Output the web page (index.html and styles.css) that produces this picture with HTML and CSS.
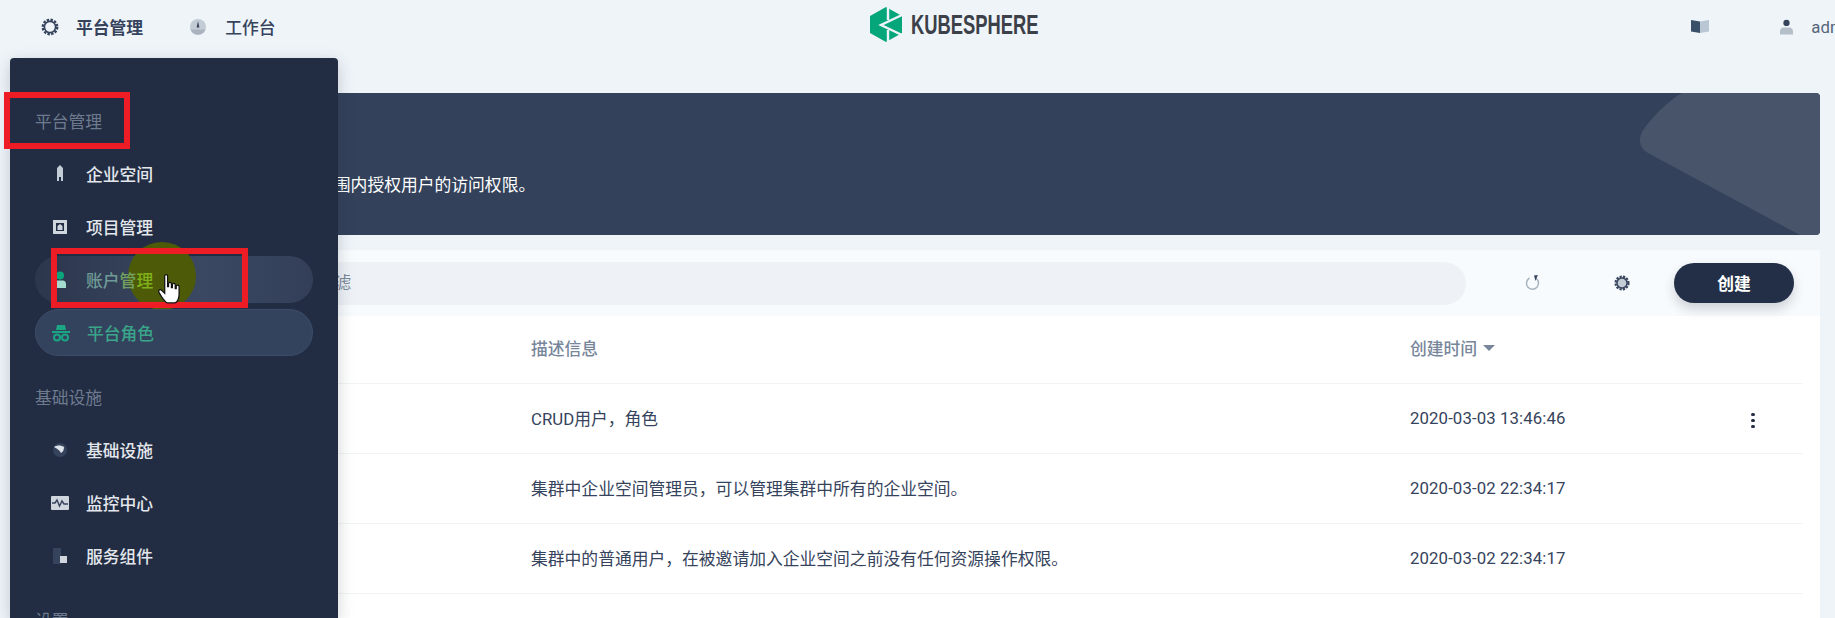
FILE: index.html
```html
<!DOCTYPE html>
<html lang="zh-CN">
<head>
    <meta charset="UTF-8">
    <meta name="viewport" content="width=device-width, initial-scale=1.0">
    <title>平台角色 - KubeSphere</title>
    <link rel="stylesheet" href="styles.css">
</head>
<body>
    <header class="topbar">
        <nav class="topbar-nav">
            <a class="topbar-link">
                <svg class="topbar-icon" viewBox="0 0 20 20"><circle cx="10" cy="10" r="7.2" fill="none" stroke="#36435c" stroke-width="2.4" stroke-dasharray="2.4 1.4"/><circle cx="10" cy="10" r="5.6" fill="none" stroke="#36435c" stroke-width="1.6"/></svg>
                平台管理
            </a>
            <a class="topbar-link">
                <svg class="topbar-icon" viewBox="0 0 20 20"><circle cx="10" cy="10" r="8" fill="#c3cbd4"/><path d="M2.6 12.5a8 8 0 0 0 14.8 0z" fill="#a9b3bf"/><path d="M10 4l1.4 6.5h-2.8z" fill="#36435c"/></svg>
                工作台
            </a>
        </nav>
        <div class="logo">
            <svg class="logo-mark" viewBox="0 0 32 35">
                <path d="M16 0L32 9V26L16 35L0 26V9z" fill="#05a67a"/>
                <path d="M18 0V13M18 23V35M32 8L11 18L32 28" fill="none" stroke="#eff4f9" stroke-width="2.4"/>
            </svg>
            <span class="logo-text">KUBESPHERE</span>
        </div>
        <div class="topbar-right">
            <svg class="book-icon" viewBox="0 0 18 13"><path d="M0 0l9 1.5V13L0 11.5z" fill="#3a5068"/><path d="M18 0L9 1.5V13l9-1.5z" fill="#b9c6d3"/></svg>
            <a class="user-link">
                <svg class="user-icon" viewBox="0 0 14 16"><circle cx="7" cy="3.6" r="3.4" fill="#36435c"/><path d="M0 16v-3.5C0 10 2 8.5 4 8.5h6c2 0 4 1.500 4 4V16z" fill="#b4bfca"/></svg>
                admin
            </a>
        </div>
    </header>

    <main class="content">
        <section class="banner">
            <svg class="banner-shape" viewBox="0 0 180 142"><path d="M42 0H176a4 4 0 0 1 4 4V138a4 4 0 0 1-4 4H160L8 60C-2 54-2 44 4 36C12 24 28 8 42 0z" fill="#475469"/></svg>
            <h1 class="banner-title">平台角色</h1>
            <p class="banner-desc">平台角色定义了平台范围内授权用户的访问权限。</p>
        </section>

        <section class="panel">
            <div class="toolbar">
                <div class="search">请输入关键词过滤</div>
                <button class="icon-button">
                    <svg viewBox="0 0 16 16" width="16" height="16"><path d="M10.800 3.200A6 6 0 1 1 4.500 3" fill="none" stroke="#a8b3bf" stroke-width="1.500"/><path d="M9 0.500L12.800 0L10.500 6z" fill="#36435c"/></svg>
                </button>
                <button class="icon-button">
                    <svg viewBox="0 0 20 20" width="18" height="18"><circle cx="10" cy="10" r="7.200" fill="#c3ccd5" stroke="#36435c" stroke-width="2.400" stroke-dasharray="2.400 1.400"/><circle cx="10" cy="10" r="5.600" fill="none" stroke="#36435c" stroke-width="1.600"/></svg>
                </button>
                <button class="create-button">创建</button>
            </div>

            <div class="table">
                <div class="table-row table-head">
                    <span></span>
                    <span>描述信息</span>
                    <span class="sortable">创建时间<i class="sort-caret"></i></span>
                    <span></span>
                </div>
                <div class="table-row">
                    <span></span>
                    <span>CRUD用户，角色</span>
                    <span class="row-date">2020-03-03 13:46:46</span>
                    <span class="row-more"><i></i><i></i><i></i></span>
                </div>
                <div class="table-row">
                    <span></span>
                    <span>集群中企业空间管理员，可以管理集群中所有的企业空间。</span>
                    <span class="row-date">2020-03-02 22:34:17</span>
                    <span></span>
                </div>
                <div class="table-row">
                    <span></span>
                    <span>集群中的普通用户，在被邀请加入企业空间之前没有任何资源操作权限。</span>
                    <span class="row-date">2020-03-02 22:34:17</span>
                    <span></span>
                </div>
            </div>
        </section>
    </main>

    <aside class="menu">
        <h2 class="menu-heading">平台管理</h2>
        <ul class="menu-list">
            <li class="menu-item">
                <svg class="menu-icon" viewBox="0 0 20 20"><path d="M7 17V4l3-3 3 3v13h-2v-4H9v4z" fill="#c3cdd8"/></svg>
                企业空间
            </li>
            <li class="menu-item">
                <svg class="menu-icon" viewBox="0 0 20 20"><path d="M3 3h14v14H3zM6 6v8h8V6z" fill="#cfd6de" fill-rule="evenodd"/><path d="M7.500 13V9l2.500-2 2.500 2v4z" fill="#cfd6de"/></svg>
                项目管理
            </li>
            <li class="menu-item menu-item-hover">
                <span class="cursor-glow"></span>
                <svg class="menu-icon" viewBox="0 0 20 20"><circle cx="10" cy="5.500" r="4" fill="#0aa67c"/><path d="M4 18v-4c0-2 1.500-3.500 3-3.500h6c1.500 0 3 1.500 3 3.500v4z" fill="#a5dcd0"/></svg>
                <span class="menu-label">账户<span class="glow-fade">管</span><span class="glow-text">理</span></span>
            </li>
            <li class="menu-item menu-item-active">
                <svg class="menu-icon" viewBox="0 0 20 20"><path d="M6 2h8l1 5H5zM1 8h18v2H1z" fill="#1aa583"/><circle cx="6" cy="14.500" r="3" fill="none" stroke="#1aa583" stroke-width="2"/><circle cx="14" cy="14.500" r="3" fill="none" stroke="#1aa583" stroke-width="2"/></svg>
                平台角色
            </li>
        </ul>
        <h2 class="menu-heading">基础设施</h2>
        <ul class="menu-list">
            <li class="menu-item">
                <svg class="menu-icon" viewBox="0 0 20 20"><circle cx="10" cy="10" r="7" fill="#36435c"/><path d="M4 7c3-2 7-2 10 0 0 3-1 5-3 6-1-2-3-4-7-6z" fill="#dfe4ea"/></svg>
                基础设施
            </li>
            <li class="menu-item">
                <svg class="menu-icon" viewBox="0 0 20 20"><rect x="1" y="3" width="18" height="14" rx="1" fill="#cfd6de"/><path d="M2 10h3l2-3 2.500 6L12 8l2 3h4" fill="none" stroke="#36435c" stroke-width="1.400"/></svg>
                监控中心
            </li>
            <li class="menu-item">
                <svg class="menu-icon" viewBox="0 0 20 20"><rect x="3" y="2" width="8" height="16" fill="#36435c"/><rect x="10" y="10" width="7" height="7" fill="#cfd6de"/></svg>
                服务组件
            </li>
        </ul>
        <h2 class="menu-heading">设置</h2>
    </aside>

    <!-- annotations drawn over the recording -->
    <div class="mark mark-heading"></div>
    <div class="mark mark-item"></div>
    <svg class="hand-cursor" viewBox="0 0 24 32">
        <path d="M7 2c0-2 3-2 3 0v11l1 0V10c0-2 3-2 3 0v4h1v-3c0-2 3-2 3 0v4h1v-2c0-2 3-2 3 0v8c0 5-2 9-5 9h-7c-2 0-4-3-6-6l-3-5c-1-2 1-4 3-2l3 3z" fill="#fff" stroke="#111" stroke-width="1.300"/>
    </svg>
</body>
</html>
```

FILE: styles.css
```css
* {
    box-sizing: border-box;
}

html, body {
    margin: 0;
    height: 100%;
    overflow: hidden;
}

body {
    position: relative;
    font-family: Roboto, "Noto Sans CJK SC", sans-serif;
    font-size: 16.8px;
    color: #36435c;
    background-color: #eff4f9;
}

/* top bar */
.topbar {
    display: flex;
    align-items: center;
    height: 54px;
    padding-left: 40px;
}

.topbar-nav {
    display: flex;
    gap: 45px;
}

.topbar-link {
    display: flex;
    align-items: center;
    gap: 16px;
    font-weight: 700;
    color: #36435c;
}

.topbar-icon {
    width: 20px;
    height: 20px;
}

.topbar-link + .topbar-link {
    gap: 17px;
    font-weight: 500;
}

.logo {
    display: flex;
    align-items: center;
    gap: 9px;
    margin-left: 594px;
    margin-bottom: 5px;
}

.logo-mark {
    width: 32px;
    height: 35px;
}

.logo-text {
    width: 128px;
    font-family: "Liberation Sans", sans-serif;
    font-size: 28px;
    font-weight: 700;
    line-height: 35px;
    color: #3b4049;
    transform: scaleX(0.655);
    transform-origin: left center;
    white-space: nowrap;
}

.topbar-right {
    display: flex;
    align-items: center;
    gap: 71px;
    margin-left: auto;
    margin-right: -23px;
}

.book-icon {
    width: 18px;
    height: 13px;
    margin-bottom: 2px;
}

.user-link {
    display: flex;
    align-items: center;
    gap: 18px;
    color: #56647a;
}

.user-icon {
    width: 13px;
    height: 16px;
}

/* page content */
.content {
    padding: 39px 15px 0 20px;
}

.banner {
    position: relative;
    height: 142px;
    padding: 30px 0 0 146px;
    border-radius: 4px;
    background-color: #33415a;
    color: #fff;
    overflow: hidden;
}

.banner-shape {
    position: absolute;
    top: 0;
    right: 0;
    width: 180px;
    height: 142px;
}

.banner-title {
    margin: 0;
    font-size: 24px;
    line-height: 32px;
}

.banner-desc {
    margin: 18px 0 0;
    line-height: 24px;
}

.panel {
    margin-top: 15px;
}

.toolbar {
    display: flex;
    align-items: center;
    height: 66px;
    padding: 0 26px 0 0;
    background-color: #f8fbfd;
}

.search {
    width: 1446px;
    height: 43px;
    padding-left: 197px;
    border-radius: 22px;
    background-color: #eef2f7;
    color: #7d8a99;
    line-height: 43px;
}

.icon-button {
    display: flex;
    align-items: center;
    justify-content: center;
    width: 32px;
    height: 32px;
    padding: 0;
    border: none;
    background: none;
}

.icon-button:nth-child(2) {
    margin-left: 51px;
}

.icon-button:nth-child(3) {
    margin-left: 57px;
}

.create-button {
    width: 120px;
    height: 40px;
    margin-left: 36px;
    border: none;
    border-radius: 20px;
    background-color: #232f46;
    box-shadow: 0 6px 12px rgba(36, 46, 66, 0.2);
    color: #fff;
    font-family: inherit;
    font-size: 16.8px;
    font-weight: 700;
}

.table {
    height: 320px;
    padding-right: 17px;
    background-color: #fff;
}

.table-row {
    display: grid;
    grid-template-columns: 511px 879px 1fr 52px;
    align-items: center;
    height: 70px;
    padding-bottom: 2px;
    border-bottom: 1px solid #f1f3f6;
}

.table-head {
    height: 68px;
    padding-bottom: 3px;
    color: #78869b;
    font-weight: 500;
}

.sortable {
    display: flex;
    align-items: center;
    gap: 6px;
}

.sort-caret {
    width: 0;
    height: 0;
    border-left: 6px solid transparent;
    border-right: 6px solid transparent;
    border-top: 6px solid #78869b;
}

.row-date {
    letter-spacing: 0.1px;
}

.row-more {
    display: flex;
    flex-direction: column;
    gap: 2.5px;
    padding-top: 6px;
}

.row-more i {
    width: 3.5px;
    height: 3.5px;
    border-radius: 50%;
    background-color: #242e42;
}

/* dropdown menu over the page */
.menu {
    position: absolute;
    top: 58px;
    left: 10px;
    width: 328px;
    height: 560px;
    padding: 52px 0 0;
    border-radius: 4px 4px 0 0;
    background-color: #222d43;
    box-shadow: 0 4px 16px rgba(36, 46, 66, 0.22);
    overflow: hidden;
}

.menu-heading {
    margin: 0 0 16px 25px;
    font-size: 16.8px;
    font-weight: 400;
    line-height: 24px;
    color: #6e7b8f;
}

.menu-list {
    display: flex;
    flex-direction: column;
    gap: 6px;
    margin: 0 0 30px;
    padding: 0;
    list-style: none;
}

.menu-item {
    position: relative;
    display: flex;
    align-items: center;
    gap: 16px;
    height: 47px;
    margin: 0 25px;
    padding-left: 15px;
    border-radius: 24px;
    color: #e3e7ec;
    font-weight: 500;
}

.menu-icon {
    position: relative;
    width: 20px;
    height: 20px;
}

.menu-item-hover {
    background: linear-gradient(90deg, #2c374d, #3a4862 60%, #333f58);
    color: #6f9a96;
}

.menu-label {
    position: relative;
}

.glow-fade {
    color: #72a060;
}

.glow-text {
    color: #7fb01a;
}

.cursor-glow {
    position: absolute;
    top: -14px;
    left: 93px;
    width: 68px;
    height: 68px;
    border-radius: 50%;
    background-color: #4d5b08;
}

.menu-item-active {
    border: 1px solid #3d4c68;
    background-color: #34435d;
    color: #3aa58a;
}

/* red boxes and pointer from the recording */
.mark {
    position: absolute;
    border: 6px solid #ee1c25;
}

.mark-heading {
    top: 92px;
    left: 4px;
    width: 126px;
    height: 57px;
}

.mark-item {
    top: 248px;
    left: 51px;
    width: 197px;
    height: 60px;
}

.hand-cursor {
    position: absolute;
    top: 274px;
    left: 158px;
    width: 23px;
    height: 31px;
}
```
